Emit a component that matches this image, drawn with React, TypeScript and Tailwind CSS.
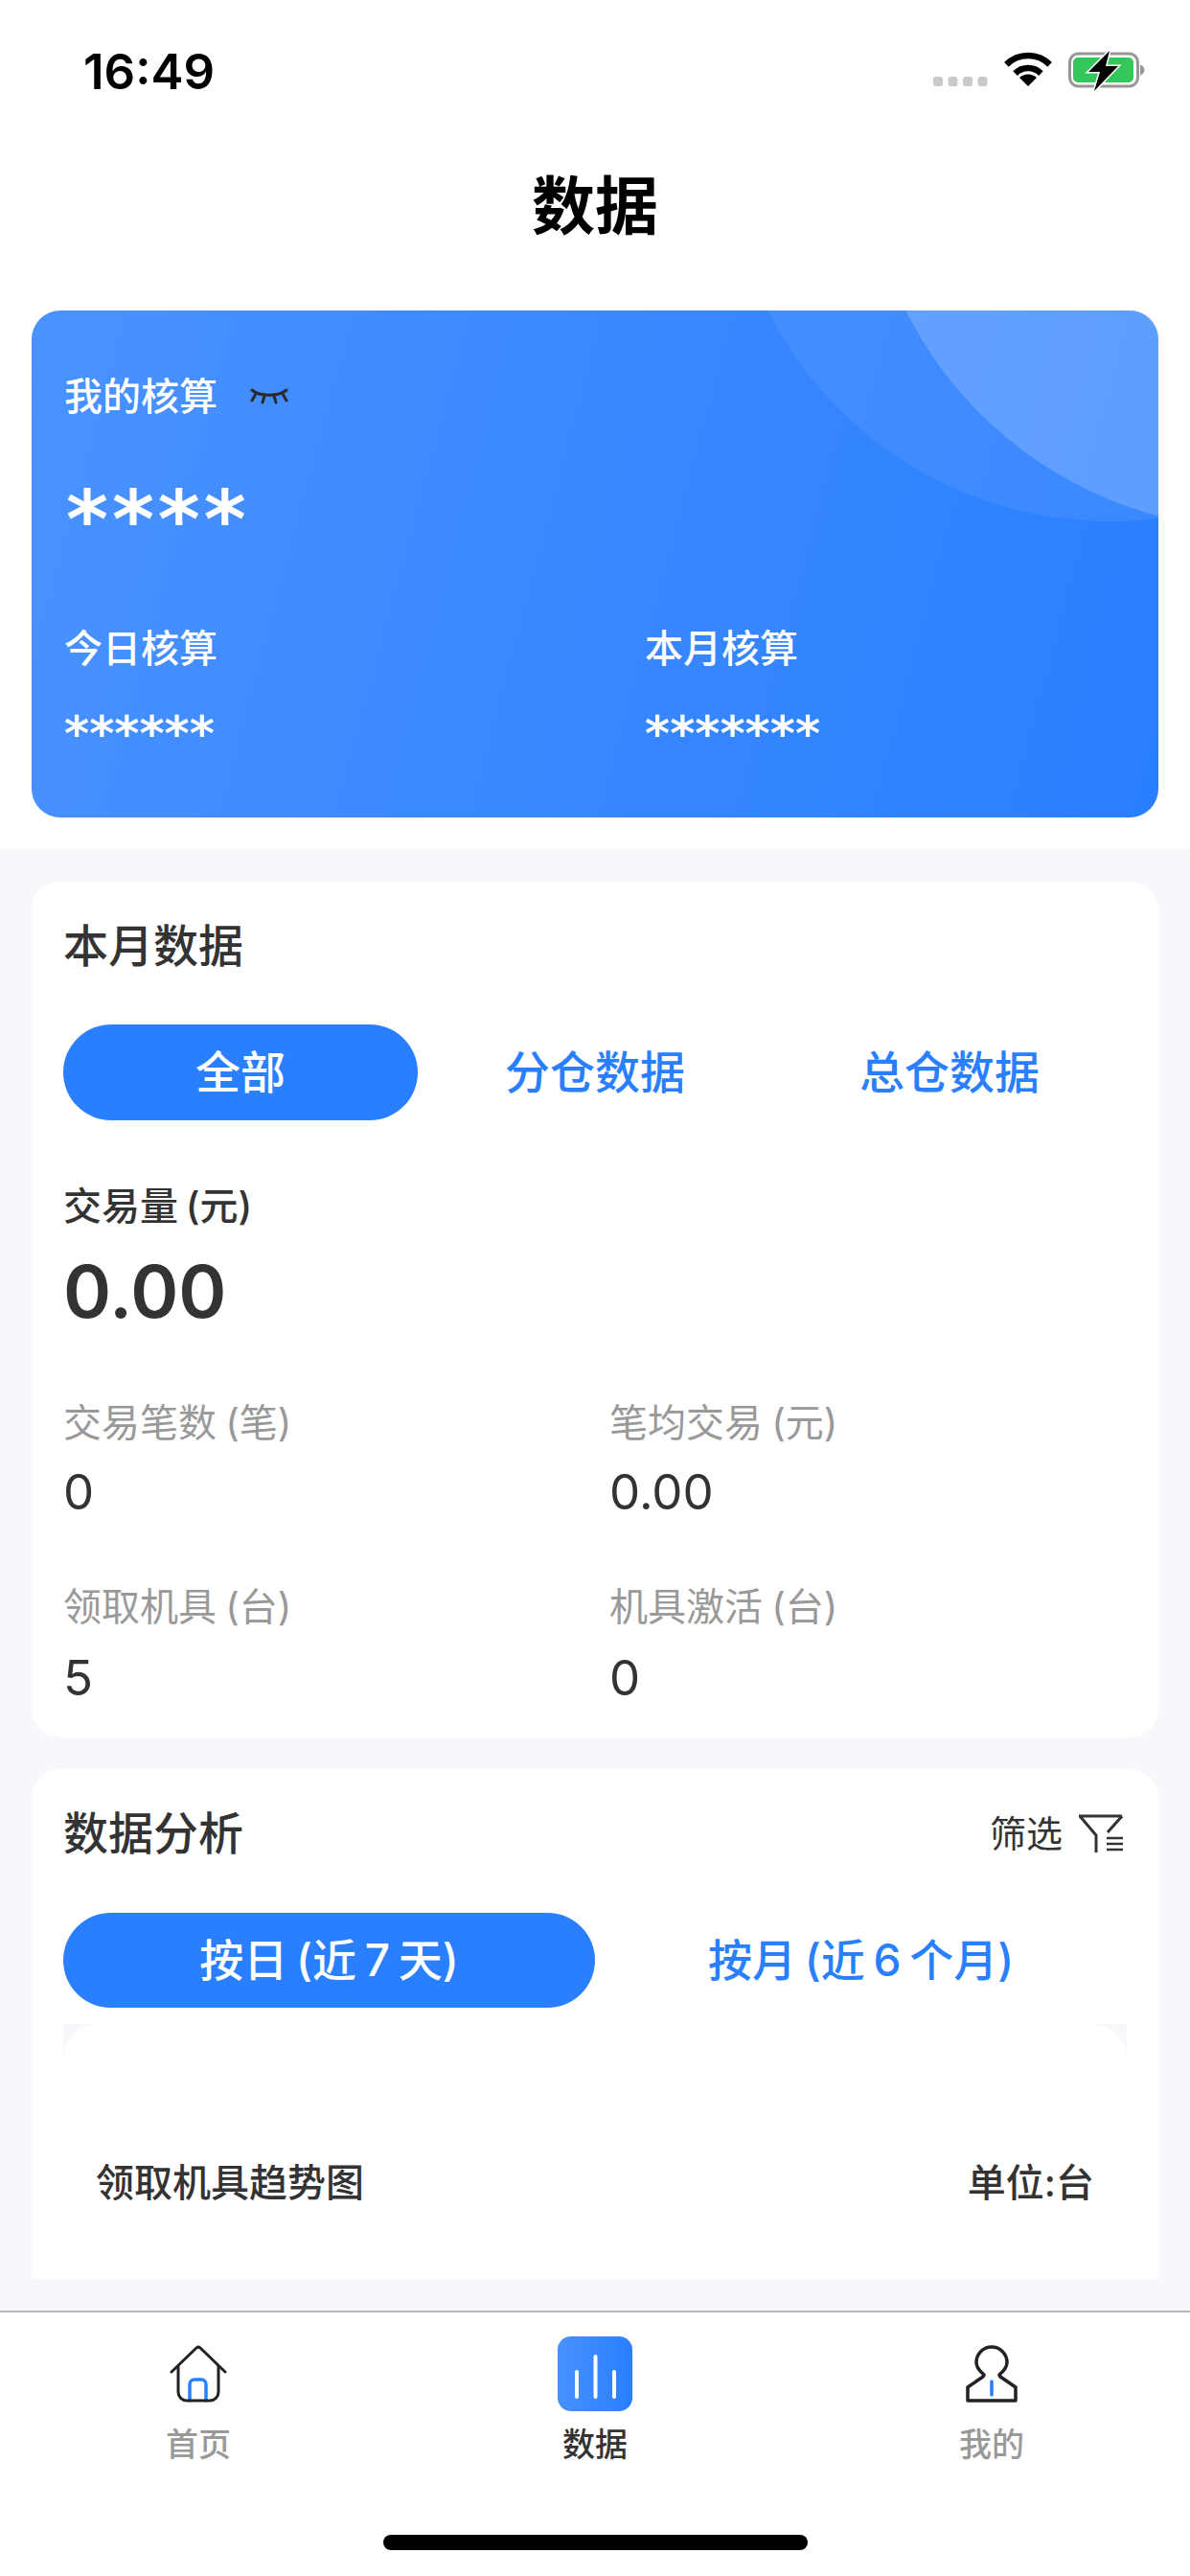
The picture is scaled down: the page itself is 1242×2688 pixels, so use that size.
const font = "font-['Inter','Noto_Sans_CJK_SC',sans-serif]";

function StatusIcons() {
  return (
    <svg width="224" height="44" viewBox="0 0 224 44" fill="none">
      <g fill="#c9c9c9">
        <rect x="0" y="27" width="10" height="10" rx="3" />
        <rect x="15.500" y="27" width="10" height="10" rx="3" />
        <rect x="31" y="27" width="10" height="10" rx="3" />
        <rect x="46.500" y="27" width="10" height="10" rx="3" />
      </g>
      <path d="M76.400 14.400A32 32 0 0 1 121.600 14.400" stroke="#000" strokeWidth="6.500" />
      <path d="M85.600 23.600A19 19 0 0 1 112.400 23.600" stroke="#000" strokeWidth="6.500" />
      <path d="M99 37L90 28A13 13 0 0 1 108 28Z" fill="#000" />
      <rect x="142.500" y="3" width="71" height="34" rx="9" stroke="#979797" strokeWidth="3" />
      <rect x="146" y="7" width="63" height="26" rx="5" fill="#34c759" />
      <path d="M216 14.500c3 1 4.500 3 4.500 5.500s-1.500 4.500-4.500 5.500z" fill="#979797" />
      <path d="M184 0L162 22h12l-6 20 25-26h-13z" fill="#000" stroke="#fff" strokeWidth="3" paintOrder="stroke" />
    </svg>
  );
}

function CardArt() {
  return (
    <svg className="absolute inset-0" width="1176" height="529" viewBox="0 0 1176 529" fill="none">
      <circle cx="1126" cy="-181" r="401" fill="#fff" fillOpacity="0.07" />
      <circle cx="1281" cy="-184" r="412" fill="#fff" fillOpacity="0.18" />
    </svg>
  );
}

function EyeClosed() {
  return (
    <svg width="40" height="18" viewBox="0 0 40 18" fill="none" stroke="#2b2b2b" strokeWidth="3" strokeLinecap="round">
      <path d="M2 2C10 9 30 9 38 2" />
      <path d="M6 6L2 13M15 8L13 15M25 8L27 15M34 6L38 13" />
    </svg>
  );
}

function FilterIcon() {
  return (
    <svg width="46" height="40" viewBox="0 0 46 40" fill="none" stroke="#333" strokeWidth="3">
      <path d="M45 2H1L18 22V40" />
      <path d="M45 2L30 19" />
      <path d="M29 25H46M29 31H46M29 37H46" strokeWidth="2.400" />
    </svg>
  );
}

function HomeIcon() {
  return (
    <svg width="60" height="60" viewBox="0 0 60 60" fill="none" strokeLinecap="round" strokeLinejoin="round">
      <path d="M21 58V41a5 5 0 0 1 5-5h7a5 5 0 0 1 5 5v17" stroke="#2a7fff" strokeWidth="3.500" />
      <path d="M2 28L28 3a3 3 0 0 1 4 0L58 28" stroke="#222" strokeWidth="3" />
      <path d="M9 22V49a9 9 0 0 0 9 9H42a9 9 0 0 0 9-9V22" stroke="#222" strokeWidth="3" />
    </svg>
  );
}

function DataIcon() {
  return (
    <svg width="78" height="78" viewBox="0 0 78 78" fill="none">
      <defs>
        <linearGradient id="tabData" x1="0" y1="0" x2="1" y2="0">
          <stop offset="0" stopColor="#4790ff" />
          <stop offset="1" stopColor="#2a7fff" />
        </linearGradient>
      </defs>
      <rect width="78" height="78" rx="14" fill="url(#tabData)" />
      <path d="M20 37V63M39.500 21V63M59 37V63" stroke="#fff" strokeWidth="4" strokeLinecap="round" />
    </svg>
  );
}

function UserIcon() {
  return (
    <svg width="54" height="60" viewBox="0 0 54 60" fill="none" strokeLinejoin="round">
      <path d="M19 31C17 29 11 25 11 18A16 16 0 0 1 43 18C43 25 37 29 35 31C35 32 35 32 36 33L52 44V58H2V44L18 33C19 32 19 32 19 31Z" stroke="#222" strokeWidth="3.500" />
      <path d="M27 38V52" stroke="#2a7fff" strokeWidth="3.500" strokeLinecap="round" />
    </svg>
  );
}

function Stat({ label, value, valueClass }: { label: string; value: string; valueClass?: string }) {
  return (
    <div>
      <div className="flex h-[50px] items-center text-[40px] text-[#999999] [word-spacing:-2px]">{label}</div>
      <div className={`flex h-[60px] items-center text-[51px] text-[#333333] ${valueClass ?? "mt-[17px]"}`}>{value}</div>
    </div>
  );
}

function NavItem({ label, active, children }: { label: string; active?: boolean; children: React.ReactNode }) {
  return (
    <div className="flex flex-col items-center">
      <div className="flex h-[78px] items-center justify-center">{children}</div>
      <div className={`mt-[14px] flex h-[40px] items-center text-[34px] font-medium ${active ? "text-[#333333]" : "text-[#999999]"}`}>
        {label}
      </div>
    </div>
  );
}

export default function App() {
  return (
    <div className={`flex h-[2688px] w-[1242px] flex-col overflow-hidden bg-[#f7f8fc] ${font}`}>
      <div className="shrink-0 bg-white px-[33px] pb-[33px]">
        <div className="-mx-[33px] flex h-[150px] items-center justify-between pr-[44px] pl-[87px]">
          <span className="text-[51px] font-semibold text-black">16:49</span>
          <StatusIcons />
        </div>
        <div className="flex h-[130px] items-center justify-center text-[66px] font-bold text-black">数据</div>
        <div className="relative mt-[44px] h-[529px] overflow-hidden rounded-[30px] bg-[linear-gradient(105deg,#4a92ff,#3787ff_55%,#2a7fff)] px-[34px] pt-[65px] text-white">
          <CardArt />
          <div className="relative">
            <div className="flex h-[50px] items-center gap-[34px] text-[40px] font-medium">
              我的核算
              <EyeClosed />
            </div>
            <div className="mt-[48px] flex h-[80px] items-center pl-[2px] font-['DejaVu_Sans',sans-serif] text-[84px] font-bold leading-none tracking-[4px]">
              <span className="translate-y-[15px]">****</span>
            </div>
            <div className="mt-[85px] grid grid-cols-[606px_1fr]">
              <div>
                <div className="flex h-[50px] items-center text-[40px] font-medium">今日核算</div>
                <div className="mt-[38px] flex h-[40px] items-center font-['DejaVu_Sans',sans-serif] text-[50px] font-bold leading-none">
                  <span className="translate-y-[6px]">******</span>
                </div>
              </div>
              <div>
                <div className="flex h-[50px] items-center text-[40px] font-medium">本月核算</div>
                <div className="mt-[38px] flex h-[40px] items-center font-['DejaVu_Sans',sans-serif] text-[50px] font-bold leading-none">
                  <span className="translate-y-[6px]">*******</span>
                </div>
              </div>
            </div>
          </div>
        </div>
      </div>

      <div className="mx-[33px] mt-[34px] h-[893px] shrink-0 rounded-[30px] bg-white px-[33px] pt-[37px]">
        <div className="flex h-[60px] items-center text-[47px] font-medium text-[#333333]">本月数据</div>
        <div className="mt-[52px] grid grid-cols-3 text-[47px] font-medium">
          <div className="flex h-[100px] items-center justify-center rounded-full bg-[#2a7fff] text-white">全部</div>
          <div className="flex h-[100px] items-center justify-center text-[#2a7fff]">分仓数据</div>
          <div className="flex h-[100px] items-center justify-center text-[#2a7fff]">总仓数据</div>
        </div>
        <div className="mt-[65px] flex h-[50px] items-center text-[40px] font-medium text-[#333333] [word-spacing:-3px]">交易量 (元)</div>
        <div className="mt-[18px] flex h-[90px] items-center text-[76px] font-semibold text-[#333333]">0.00</div>
        <div className="mt-[68px] grid grid-cols-[570px_1fr]">
          <Stat label="交易笔数 (笔)" value="0" />
          <Stat label="笔均交易 (元)" value="0.00" />
        </div>
        <div className="mt-[65px] grid grid-cols-[570px_1fr]">
          <Stat label="领取机具 (台)" value="5" valueClass="mt-[19px]" />
          <Stat label="机具激活 (台)" value="0" valueClass="mt-[19px]" />
        </div>
      </div>

      <div className="mx-[33px] mt-[33px] h-[532px] shrink-0 rounded-t-[30px] bg-white px-[33px] pt-[37px]">
        <div className="flex h-[60px] items-center justify-between">
          <span className="text-[47px] font-medium text-[#333333]">数据分析</span>
          <div className="flex items-center gap-[17px] pr-[4px] text-[38px] text-[#333333]">
            筛选
            <FilterIcon />
          </div>
        </div>
        <div className="mt-[53px] grid grid-cols-2 text-[46px] font-medium [word-spacing:-3.500px]">
          <div className="flex h-[99px] items-center justify-center rounded-full bg-[#2a7fff] text-white">按日 (近 7 天)</div>
          <div className="flex h-[99px] items-center justify-center text-[#2a7fff]">按月 (近 6 个月)</div>
        </div>
        <div className="mt-[17px] bg-[linear-gradient(#f7f8fc_40px,#ffffff_40px)]">
          <div className="flex h-[266px] items-center justify-between rounded-t-[36px] bg-white px-[34px] pt-[66px] text-[40px] font-medium text-[#333333]">
            <span>领取机具趋势图</span>
            <span>单位:台</span>
          </div>
        </div>
      </div>

      <div className="flex-1" />

      <div className="h-[277px] shrink-0 border-t-2 border-[#b9b9bd] bg-white">
        <div className="grid grid-cols-3 pt-[25px]">
          <NavItem label="首页">
            <HomeIcon />
          </NavItem>
          <NavItem label="数据" active>
            <DataIcon />
          </NavItem>
          <NavItem label="我的">
            <UserIcon />
          </NavItem>
        </div>
        <div className="mx-auto mt-[75px] h-[16px] w-[443px] rounded-full bg-black" />
      </div>
    </div>
  );
}
